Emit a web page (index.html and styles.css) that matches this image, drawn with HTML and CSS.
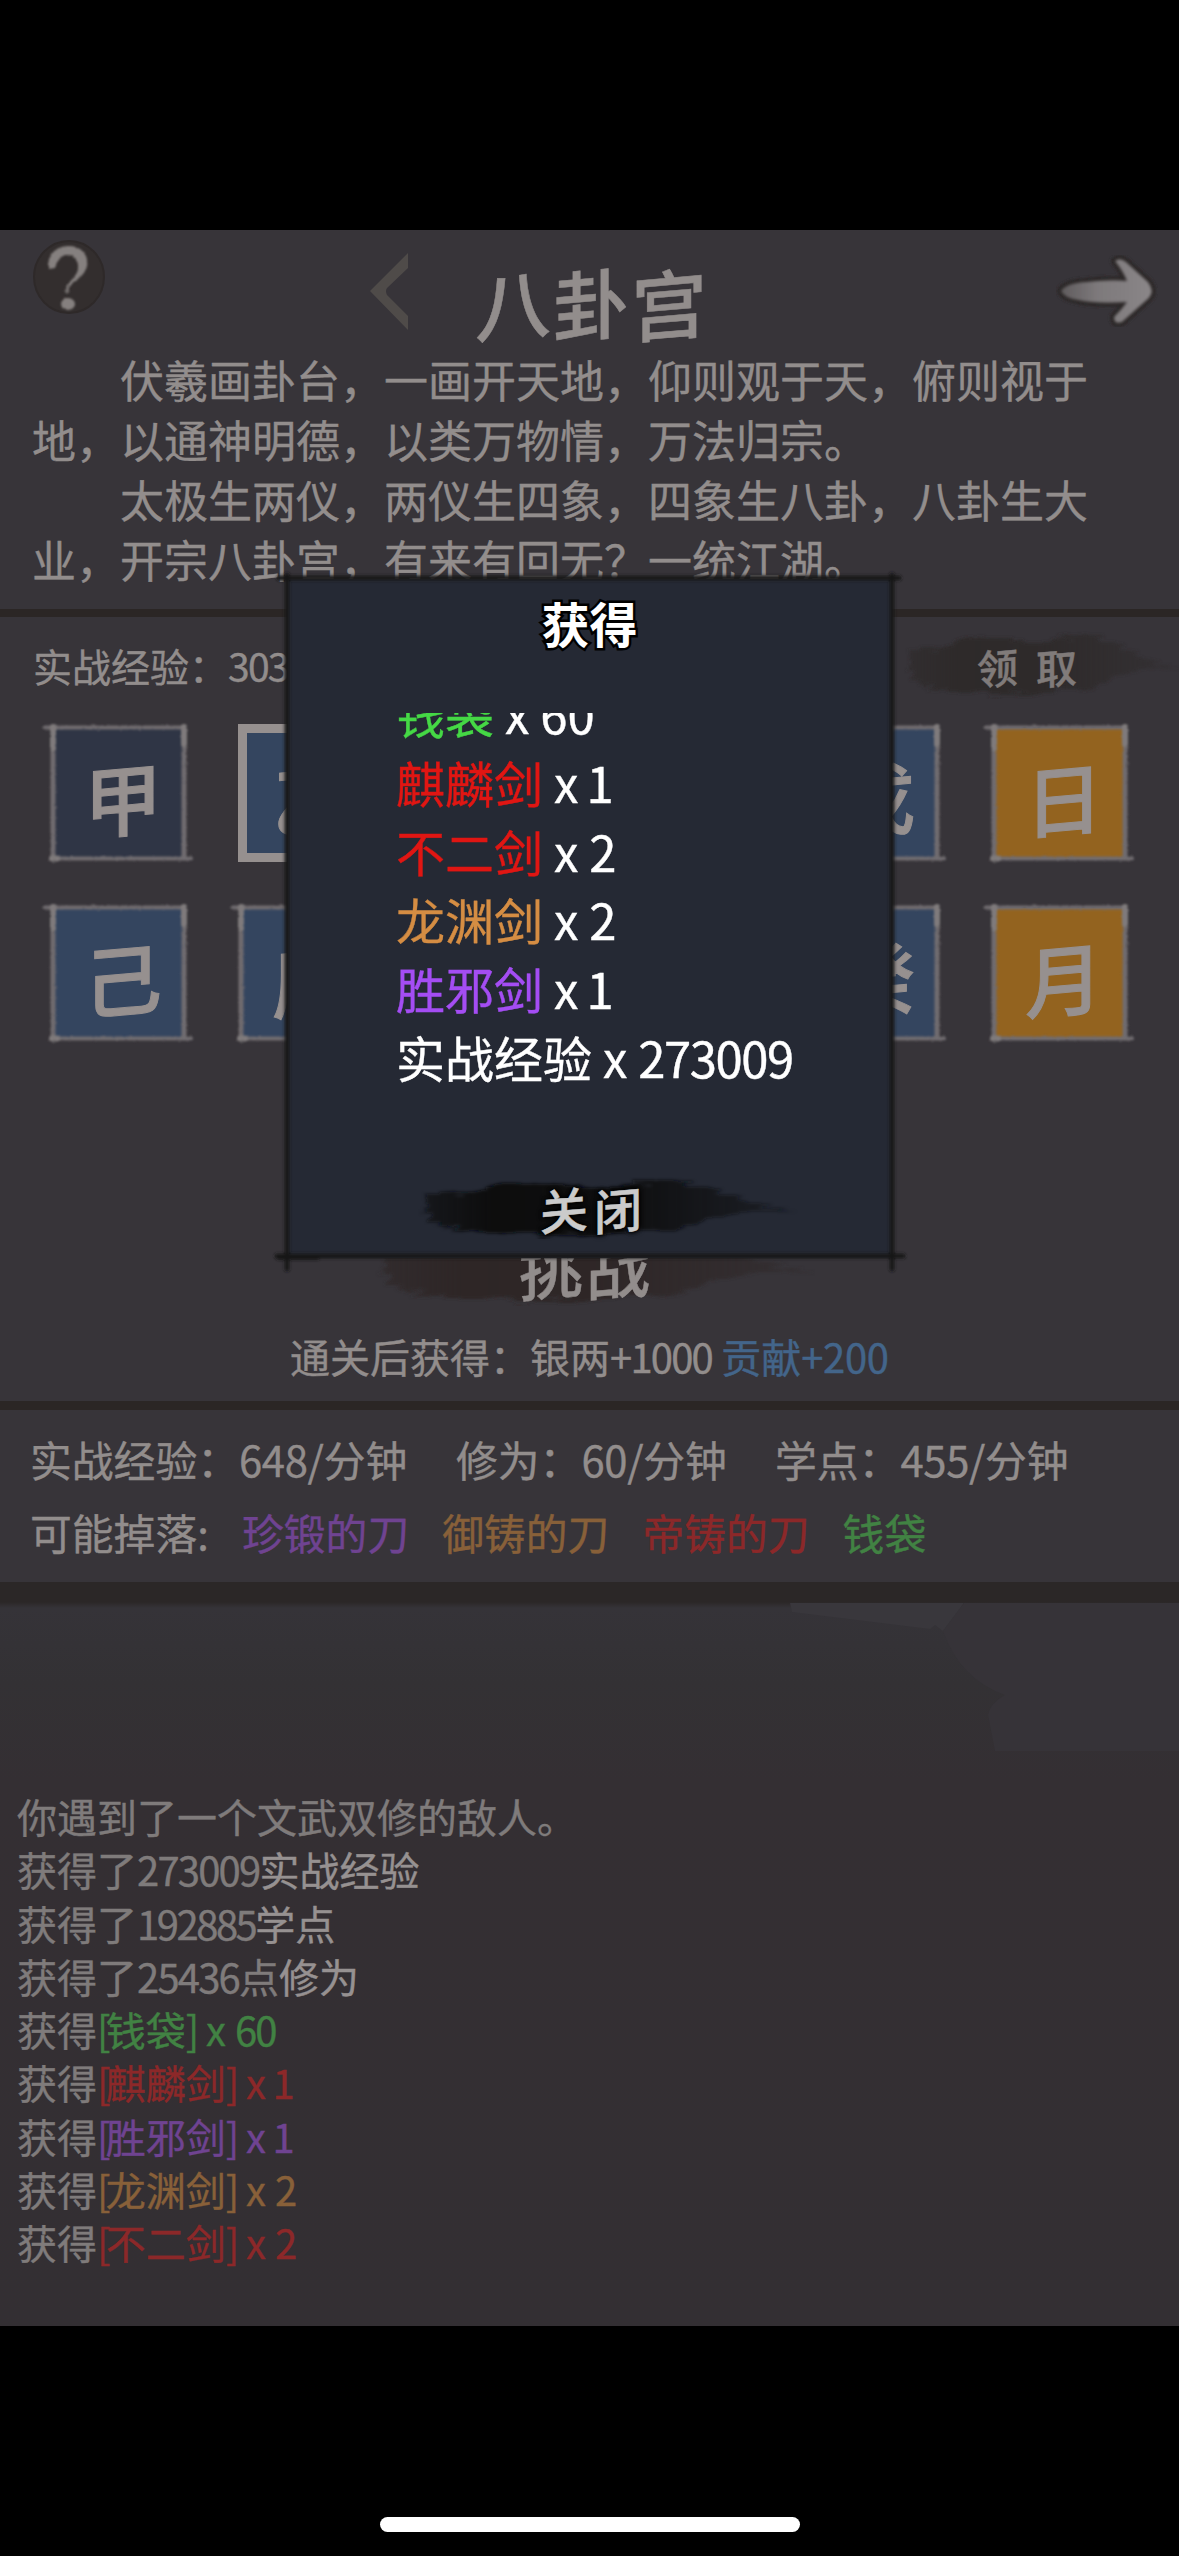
FILE: index.html
```html
<!DOCTYPE html>
<html lang="zh-CN">
<head>
<meta charset="utf-8">
<title>八卦宫</title>
<link rel="stylesheet" href="styles.css">
</head>
<body>
<svg class="defs" width="0" height="0" aria-hidden="true">
  <defs>
    <filter id="rough" filterUnits="userSpaceOnUse" x="-14" y="-14" width="166" height="166">
      <feTurbulence type="fractalNoise" baseFrequency="0.35" numOctaves="2" seed="4"/>
      <feDisplacementMap in="SourceGraphic" scale="2.5" xChannelSelector="R" yChannelSelector="G"/>
      <feGaussianBlur stdDeviation="0.8"/>
    </filter>
    <filter id="streak" filterUnits="userSpaceOnUse" x="-20" y="-10" width="420" height="82">
      <feTurbulence type="fractalNoise" baseFrequency="0.025 0.28" numOctaves="2" seed="7"/>
      <feDisplacementMap in="SourceGraphic" scale="14" xChannelSelector="R" yChannelSelector="A"/>
      <feGaussianBlur stdDeviation="1.4"/>
    </filter>
    <filter id="soft" filterUnits="userSpaceOnUse" x="-30" y="-30" width="700" height="760"><feGaussianBlur stdDeviation="1.6"/></filter>
    <symbol id="brush" viewBox="0 0 380 62" preserveAspectRatio="none" overflow="visible">
      <path filter="url(#streak)" fill="currentColor" d="M6 18 L42 16 Q70 6 108 6 Q160 10 196 10 Q240 0 276 8 Q310 16 326 24 L378 33 L322 36 L290 42 Q270 54 210 55 Q150 62 100 56 L32 54 L44 49 L10 46 L14 38 L2 34 L12 28 Z"/>
    </symbol>
    <symbol id="frame" viewBox="0 0 138 138" overflow="visible">
      <g filter="url(#rough)" fill="none" stroke="#706c6f" stroke-linecap="round">
        <path stroke-width="4" d="M-5 3.5H134M3 134.5H141"/>
        <path stroke-width="5" d="M3 3V134M134 3V134"/>
        <path stroke-width="6" stroke="#7f7a7b" d="M3 3V24M134 3V20M2 134.5H7"/>
      </g>
    </symbol>
  </defs>
</svg>

<main class="game">
  <section class="intro">
    <header class="head">
      <svg class="help" viewBox="0 0 72 74">
        <ellipse cx="36" cy="37" rx="35" ry="36" fill="#332e2e" stroke="#2e2929" stroke-width="2"/>
        <path filter="url(#rough)" fill="#85807f" d="M16 29C13 15 23 6 36 6C48 6 56 15 54 26C52 36 42 40 37 46L34 47C37 39 46 36 45 25C44 18 40 15 34 15C27 15 25 20 22 28Z"/>
        <path filter="url(#rough)" stroke="#75706f" stroke-width="3" stroke-linecap="round" d="M35 46L34 52"/>
        <ellipse filter="url(#rough)" cx="35" cy="64" rx="7" ry="6" fill="#85807f"/>
      </svg>
      <svg class="prev" viewBox="0 0 38 77"><path fill="#4f4b49" d="M38 0V15L17 35Q15 38 17 42L38 63V77L0 38Z"/></svg>
      <h1 class="kai title"><i>八</i><i>卦</i><i>宫</i></h1>
      <svg class="next" viewBox="0 0 102 72">
        <defs><linearGradient id="arrowtone"><stop offset="0" stop-color="#5f5b5d"/><stop offset=".4" stop-color="#7d797b"/><stop offset="1" stop-color="#8a8688"/></linearGradient></defs>
        <path filter="url(#soft)" fill="#2c2828" stroke="#2c2828" stroke-width="8" stroke-linejoin="round" d="M5 36Q10 28 30 27Q55 24 71 26Q67 16 59 6Q64 2 70 7L92 27Q99 36 93 43L66 67Q58 70 58 62Q66 54 71 47Q40 49 22 45Q8 43 5 36Z"/>
        <path filter="url(#soft)" fill="url(#arrowtone)" d="M5 36Q10 28 30 27Q55 24 71 26Q67 16 59 6Q64 2 70 7L92 27Q99 36 93 43L66 67Q58 70 58 62Q66 54 71 47Q40 49 22 45Q8 43 5 36Z"/>
      </svg>
    </header>
    <div class="story">
      <p>伏羲画卦台，一画开天地，仰则观于天，俯则视于地，以通神明德，以类万物情，万法归宗。</p>
      <p>太极生两仪，两仪生四象，四象生八卦，八卦生大业，开宗八卦宫，有来有回无？一统江湖。</p>
    </div>
  </section>

  <section class="stage">
    <div class="exp">
      <span>实战经验：<span class="n">303</span></span>
      <button class="ink claim"><svg><use href="#brush"/></svg><span class="kai"><i>领</i><i>取</i></span></button>
    </div>
    <div class="tiles">
      <div class="tile dark"><svg><use href="#frame"/></svg><span class="kai"><i>甲</i></span></div>
      <div class="tile picked"><span class="kai"><i>乙</i></span></div>
      <div class="tile"><svg><use href="#frame"/></svg><span class="kai"><i>丙</i></span></div>
      <div class="tile"><svg><use href="#frame"/></svg><span class="kai"><i>丁</i></span></div>
      <div class="tile"><svg><use href="#frame"/></svg><span class="kai"><i>戊</i></span></div>
      <div class="tile gold"><svg><use href="#frame"/></svg><span class="kai"><i>日</i></span></div>
      <div class="tile"><svg><use href="#frame"/></svg><span class="kai"><i>己</i></span></div>
      <div class="tile"><svg><use href="#frame"/></svg><span class="kai"><i>庚</i></span></div>
      <div class="tile"><svg><use href="#frame"/></svg><span class="kai"><i>辛</i></span></div>
      <div class="tile"><svg><use href="#frame"/></svg><span class="kai"><i>壬</i></span></div>
      <div class="tile"><svg><use href="#frame"/></svg><span class="kai"><i>癸</i></span></div>
      <div class="tile gold"><svg><use href="#frame"/></svg><span class="kai"><i>月</i></span></div>
    </div>
    <button class="ink fight"><svg><use href="#brush"/></svg><span class="kai"><i>挑</i><i>战</i></span></button>
    <p class="reward">通关后获得：银两<span class="n">+1000 </span><span class="blue">贡献<span class="w">+200</span></span></p>
  </section>

  <section class="rates">
    <p class="row"><span class="r1">实战经验：<span class="w">648/</span>分钟</span><span class="r2">修为：<span class="w">60/</span>分钟</span><span>学点：<span class="w">455/</span>分钟</span></p>
    <p class="row drops"><span class="d0">可能掉落:</span><span class="purple">珍锻的刀</span><span class="orange">御铸的刀</span><span class="red">帝铸的刀</span><span class="green">钱袋</span></p>
  </section>

  <section class="log">
    <svg class="wash" viewBox="0 0 1179 185">
      <path fill="#39373c" d="M790 0H964L943 28L935 22L930 26L792 9Z"/>
      <path fill="#363338" d="M943 28L964 0H1179V148H995L988 112Q990 100 1005 92Q960 76 943 28Z"/>
    </svg>
    <ul>
      <li>你遇到了一个文武双修的敌人。</li>
      <li>获得了<span class="n">273009</span><b>实战经验</b></li>
      <li>获得了<span class="m">192885</span><b>学点</b></li>
      <li>获得了<span class="n">25436</span>点<b>修为</b></li>
      <li>获得<span class="green"><span class="k">[</span>钱袋<span class="k">]</span><span class="x">x</span> <span class="n">60</span></span></li>
      <li>获得<span class="red"><span class="k">[</span>麒麟剑<span class="k">]</span><span class="x">x</span> <span class="one">1</span></span></li>
      <li>获得<span class="purple"><span class="k">[</span>胜邪剑<span class="k">]</span><span class="x">x</span> <span class="one">1</span></span></li>
      <li>获得<span class="orange"><span class="k">[</span>龙渊剑<span class="k">]</span><span class="x">x</span> 2</span></li>
      <li>获得<span class="red"><span class="k">[</span>不二剑<span class="k">]</span><span class="x">x</span> 2</span></li>
    </ul>
  </section>

  <div class="dialog">
    <svg class="edge" viewBox="0 0 605 680">
      <g filter="url(#soft)" stroke="#121215" fill="none" stroke-linecap="round">
        <path stroke-width="5" d="M-8 -1H612M0 -4V690M605 -4V690"/>
        <path stroke-width="6" d="M-8 678H30"/>
        <path stroke-width="5" d="M-10 677H616"/>
      </g>
    </svg>
    <h2>获得</h2>
    <div class="loot">
      <p><span class="l-green">钱袋</span> x 60</p>
      <p><span class="l-red">麒麟剑</span> x <span class="one">1</span></p>
      <p><span class="l-red">不二剑</span> x 2</p>
      <p><span class="l-orange">龙渊剑</span> x 2</p>
      <p><span class="l-purple">胜邪剑</span> x <span class="one">1</span></p>
      <p>实战经验 x <span class="d">273009</span></p>
    </div>
    <button class="ink close"><svg><use href="#brush"/></svg><span class="kai"><i>关</i><i>闭</i></span></button>
  </div>
</main>
<div class="homebar"></div>
</body>
</html>
```

FILE: styles.css
```css
* { box-sizing: border-box; margin: 0; padding: 0; }

body {
  width: 1179px;
  height: 2556px;
  padding-top: 230px;
  display: flex;
  flex-direction: column;
  align-items: center;
  overflow: hidden;
  background: #000;
  color: #928d8c;
  font-family: "Noto Sans CJK SC", sans-serif;
  font-weight: 400;
  -webkit-text-stroke: 0.4px currentColor;
}

.defs { position: absolute; }
ul { list-style: none; }
b { font-weight: 400; color: #969191; }

/* digit tracking */
.n { letter-spacing: -0.045em; }
.m { letter-spacing: -0.062em; }
.d { letter-spacing: -0.03em; }
.w { letter-spacing: -0.008em; }
.k { letter-spacing: -0.12em; }
.x { margin-left: 0.29em; }
.one { margin-left: -0.06em; }

button { border: 0; background: none; color: inherit; font: inherit; }

/* display lettering: heavier strokes that climb to the right */
.kai {
  display: inline-flex;
  font-family: "KaiTi", "AR PL UKai CN", "Noto Sans CJK SC", sans-serif;
  font-weight: 500;
  -webkit-text-stroke: 0.5px currentColor;
}
.kai i { font-style: normal; transform: skewY(-5deg); }

.game {
  position: relative;
  width: 1179px;
  height: 2096px;
  background: #373439;
}

/* intro */
.intro { height: 387px; border-bottom: 8px solid #2b2625; }
.head {
  height: 119px;
  padding: 10px 21px 0 33px;
  display: flex;
  align-items: flex-start;
}
.help { width: 72px; height: 74px; }
.prev { width: 38px; height: 77px; margin: 13px 0 0 265px; }
.title { margin: 19px 0 0 67px; font-size: 76px; line-height: 84px; }
.title i + i { margin-left: 2px; }
.next { width: 102px; height: 72px; margin: 15px 0 0 auto; }
.story { padding: 0 32px; width: 1122px; font-size: 44px; line-height: 60px; }
.story p { text-indent: 2em; width: 1060px; line-break: anywhere; }

/* stage */
.stage { height: 793px; border-bottom: 9px solid #2b2625; }
.exp {
  height: 96px;
  padding: 0 0 0 33px;
  display: flex;
  justify-content: space-between;
  align-items: center;
  font-size: 39px;
}
.ink { display: grid; place-items: center; }
.ink > * { grid-area: 1 / 1; }
.ink svg { -webkit-mask-image: linear-gradient(90deg, rgba(0,0,0,.6), #000 20%, rgba(0,0,0,.95) 50%, rgba(0,0,0,.35)); mask-image: linear-gradient(90deg, rgba(0,0,0,.6), #000 20%, rgba(0,0,0,.95) 50%, rgba(0,0,0,.35)); }
.claim { width: 275px; height: 68px; color: #807b7a; font-size: 41px; }
.claim svg { width: 275px; height: 68px; color: #2e2929; }
.claim span { gap: 18px; transform: translate(-15px, 1px); }

.tiles {
  padding: 11px 0 0 50px;
  display: grid;
  grid-template-columns: repeat(6, 138px);
  grid-auto-rows: 138px;
  gap: 42px 50.2px;
}
.tile {
  display: grid;
  place-items: center;
  background: linear-gradient(#34455f, #34455f) center / 131px 131px no-repeat;
  color: #96908f;
  font-size: 78px;
  line-height: 80px;
}
.tile > * { grid-area: 1 / 1; }
.tile svg { width: 138px; height: 138px; overflow: visible; }
.tile span { transform: translate(4px, 3px); -webkit-text-stroke-width: 1px; }
.tile.dark { background-image: linear-gradient(#2f3545, #2f3545); }
.tile.gold { background-image: linear-gradient(#93631f, #93631f); }
.tile.picked { border: 9px solid #96908f; background-size: 100% 100%; }

.fight { width: 440px; height: 76px; margin: 188px auto 0 375px; font-size: 64px; line-height: 70px; }
.fight svg { width: 440px; height: 76px; color: #2e2828; }
.fight span { gap: 3px; transform: translate(-11px, -2px); }
.reward { margin-top: 25px; padding-left: 290px; font-size: 40px; line-height: 50px; white-space: pre; }
.blue { margin-left: 2px; color: #43658a; }

/* rates */
.rates { height: 192px; padding: 13px 0 0 30px; border-bottom: 20px solid #2b2727; font-size: 41.8px; line-height: 73px; }
.row { display: flex; white-space: pre; }
.r1 { width: 426px; }
.r2 { width: 319px; }
.drops { gap: 33px; }
.d0 { width: 179px; }

.green { color: #418243; }
.red { color: #8c2829; }
.purple { color: #6f4391; }
.orange { color: #886039; }

/* log */
.log {
  height: 724px;
  background: linear-gradient(#2b2727, #353338 6px, #333134 80px, #342f33 180px, #332f33);
  color: #7f7b7b;
}
.wash { display: block; width: 1179px; height: 187px; }
.log ul { padding-left: 17px; font-size: 40px; line-height: 55px; }
.log li { height: 53.3px; white-space: pre; }

/* reward dialog */
.dialog {
  position: absolute;
  left: 287px;
  top: 349px;
  width: 605px;
  height: 679px;
  display: flex;
  flex-direction: column;
  background: #252934;
  color: #fff;
}
.edge { position: absolute; inset: 0; width: 605px; height: 680px; overflow: visible; }
.dialog h2 {
  height: 134px;
  padding-top: 8px;
  text-align: center;
  font-size: 48px;
  line-height: 70px;
  font-weight: 700;
  -webkit-text-stroke: 5px #000;
  paint-order: stroke fill;
}
.loot { height: 420px; padding-left: 109px; overflow: hidden; font-size: 49px; line-height: 68.8px; }
.loot p { height: 68.8px; white-space: pre; }
.loot p:first-child { margin-top: -34px; }
.l-green { color: #45d845; }
.l-red { color: #e01613; }
.l-orange { color: #d58d43; }
.l-purple { color: #a44df3; }
.close { width: 380px; height: 62px; margin: 44px 0 0 131px; color: #cbcbcb; font-size: 48px; line-height: 60px; }
.close svg { width: 380px; height: 62px; color: #07090e; }
.close span { gap: 6px; transform: translate(-17px, 0); text-shadow: 0 0 4px #000, 0 0 4px #000, 0 0 6px #000; }

.homebar { width: 420px; height: 15px; margin-top: 191px; border-radius: 8px; background: #fff; }
```
